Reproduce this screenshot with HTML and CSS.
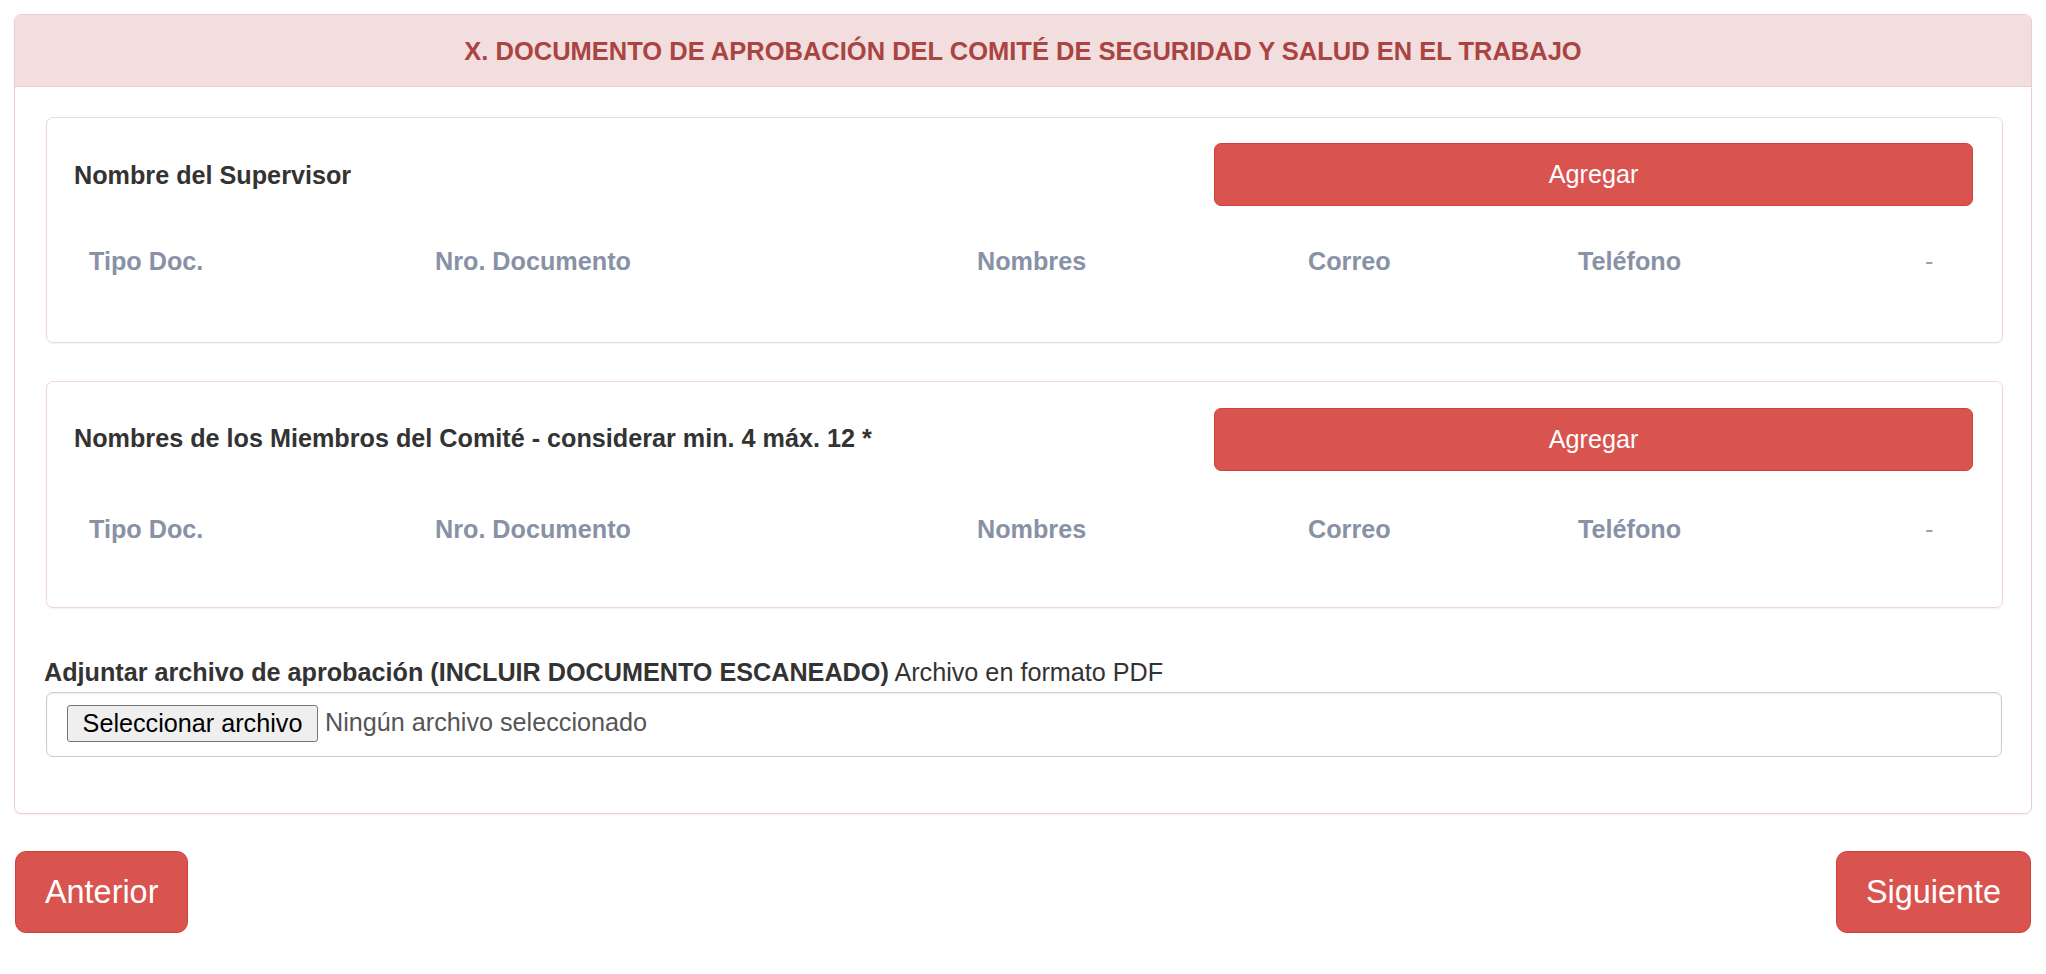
FILE: index.html
```html
<!DOCTYPE html>
<html lang="es">
<head>
<meta charset="utf-8">
<title>Documento de aprobación</title>
<link rel="stylesheet" href="styles.css">
</head>
<body>
<div class="page">
  <section class="panel">
    <header class="panel-heading">X. DOCUMENTO DE APROBACIÓN DEL COMITÉ DE SEGURIDAD Y SALUD EN EL TRABAJO</header>
    <div class="panel-body">
      <div class="card">
        <div class="card-top">
          <label class="card-label">Nombre del Supervisor</label>
          <button class="btn btn-add" type="button">Agregar</button>
        </div>
        <div class="cols">
          <span class="col">Tipo Doc.</span>
          <span class="col">Nro. Documento</span>
          <span class="col">Nombres</span>
          <span class="col">Correo</span>
          <span class="col">Teléfono</span>
          <span class="col col-dash">-</span>
        </div>
      </div>

      <div class="card card-second">
        <div class="card-top">
          <label class="card-label">Nombres de los Miembros del Comité - considerar min. 4 máx. 12 *</label>
          <button class="btn btn-add" type="button">Agregar</button>
        </div>
        <div class="cols">
          <span class="col">Tipo Doc.</span>
          <span class="col">Nro. Documento</span>
          <span class="col">Nombres</span>
          <span class="col">Correo</span>
          <span class="col">Teléfono</span>
          <span class="col col-dash">-</span>
        </div>
      </div>

      <div class="upload">
        <div class="upload-label"><strong>Adjuntar archivo de aprobación (INCLUIR DOCUMENTO ESCANEADO)</strong> Archivo en formato PDF</div>
        <div class="file-box">
          <span class="file-btn">Seleccionar archivo</span>
          <span class="file-text">Ningún archivo seleccionado</span>
        </div>
      </div>
    </div>
  </section>

  <nav class="nav">
    <button class="btn btn-lg" type="button">Anterior</button>
    <button class="btn btn-lg" type="button">Siguiente</button>
  </nav>
</div>
</body>
</html>
```

FILE: styles.css
```css
* { box-sizing: border-box; }

html, body {
  margin: 0;
  padding: 0;
  background: #ffffff;
}

body {
  font-family: "Liberation Sans", Arial, Helvetica, sans-serif;
  font-size: 25.2px;
  line-height: 36px;
  color: #333333;
}

.page {
  width: 2046px;
  padding: 14px 14px 0 14px;
}

.panel {
  border: 1px solid #ebccd1;
  border-radius: 7px;
  background: #ffffff;
  box-shadow: 0 1px 2px rgba(0, 0, 0, 0.05);
  height: 800px;
}

.panel-heading {
  height: 72px;
  background: #f2dede;
  border-bottom: 1px solid #ebccd1;
  border-radius: 6px 6px 0 0;
  color: #a94442;
  font-weight: 700;
  font-size: 25.5px;
  text-align: center;
  display: flex;
  align-items: center;
  justify-content: center;
  padding-top: 1px;
}

.panel-body {
  padding: 30px 28px 0 31px;
}

.card {
  border: 1px solid #f0d6da;
  border-radius: 7px;
  box-shadow: 0 1px 2px rgba(0, 0, 0, 0.06);
  padding: 25px 29px 0 27px;
  height: 226px;
}

.card-second {
  margin-top: 38px;
  height: 227px;
  padding-top: 26px;
}

.card-top {
  display: grid;
  grid-template-columns: 1fr 759px;
  align-items: center;
}

.card-label {
  font-weight: 700;
  color: #333333;
}

.card-second .card-label {
  margin-top: -4px;
}

.btn {
  font-family: inherit;
  color: #ffffff;
  background: #d9534f;
  border: 1px solid #d43f3a;
  cursor: pointer;
}

.btn-add {
  height: 63px;
  font-size: 25.2px;
  border-radius: 7px;
  padding: 0;
}

.cols {
  display: grid;
  grid-template-columns: 346px 542px 331px 270px 346px 1fr;
  margin-top: 37px;
  font-weight: 700;
  color: #8891a5;
}

.card-second .cols {
  margin-top: 40px;
}

.col {
  padding-left: 15px;
}

.col-dash {
  font-weight: 400;
  color: #9aa1b1;
  padding-left: 16px;
}

.upload {
  margin-top: 46px;
}

.upload-label {
  color: #333333;
  margin-left: -2px;
}

.upload-label strong {
  font-weight: 700;
}

.file-box {
  margin-top: 2px;
  width: 1956px;
  height: 65px;
  border: 1px solid #cccccc;
  border-radius: 7px;
  box-shadow: inset 0 1px 2px rgba(0, 0, 0, 0.075);
  display: flex;
  align-items: center;
  padding-left: 20px;
  color: #555555;
}

.file-btn {
  display: inline-flex;
  align-items: center;
  justify-content: center;
  width: 251px;
  height: 37px;
  margin-top: -2px;
  background: #efefef;
  border: 1px solid #767676;
  border-radius: 3px;
  color: #000000;
  font-size: 25.2px;
  line-height: 1;
}

.file-text {
  margin-left: 7px;
  margin-bottom: 6px;
  color: #555555;
}

.nav {
  display: flex;
  justify-content: space-between;
  margin-top: 37px;
  padding-left: 1px;
  padding-right: 1px;
}

.btn-lg {
  height: 82px;
  font-size: 32.4px;
  line-height: 43px;
  padding: 0 29px;
  border-radius: 11px;
}
```
